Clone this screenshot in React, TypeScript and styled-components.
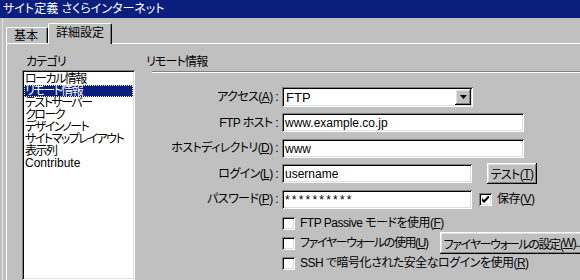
import React from "react";
import styled, { createGlobalStyle } from "styled-components";

const GlobalStyle = createGlobalStyle`
  html, body {
    margin: 0;
    background: #c0c0c0;
  }
  body {
    font-family: "Liberation Sans", "Noto Sans CJK JP", sans-serif;
    font-size: 12px;
    font-feature-settings: "palt";
    color: #000;
  }
`;

const sunken = `
  background: #fff;
  box-shadow: inset 1px 1px #808080, inset -1px -1px #fff,
    inset 2px 2px #000, inset -2px -2px #dfdfdf;
`;

const raised = `
  background: #c0c0c0;
  box-shadow: inset -1px -1px #000, inset 1px 1px #fff,
    inset -2px -2px #808080, inset 2px 2px #dfdfdf;
`;

const categories = [
  "ローカル情報",
  "リモート情報",
  "テストサーバー",
  "クローク",
  "デザインノート",
  "サイトマップレイアウト",
  "表示列",
  "Contribute",
];

// katakana in the old bitmap UI font is narrow, so japanese rows get squeezed
const isJapanese = (s: string) => /[^\x00-\x7f]/.test(s);

const App = () => {
  return (
    <>
      <GlobalStyle />
      <Window>
        <TitleBar>サイト定義 さくらインターネット</TitleBar>
        <Body>
          <TabStrip>
            <Tab>基本</Tab>
            <Tab $active>詳細設定</Tab>
          </TabStrip>
          <Panel>
            {/* category list */}
            <LeftCol>
              <CatLabel>カテゴリ</CatLabel>
              <ListBox>
                {categories.map((c) => (
                  <ListItem
                    key={c}
                    $selected={c === "リモート情報"}
                    $tight={isJapanese(c)}
                  >
                    {c}
                  </ListItem>
                ))}
              </ListBox>
            </LeftCol>

            {/* remote info form */}
            <RightCol>
              <GroupLabel>リモート情報</GroupLabel>
              <Rule />
              <Form>
                <Label>
                  アクセス(<Key>A</Key>) :
                </Label>
                <Field>
                  <Select>
                    <SelectValue>FTP</SelectValue>
                    <DropButton>
                      <svg width="7" height="4" viewBox="0 0 7 4">
                        <path d="M0 0h7L3.5 4z" fill="#000" />
                      </svg>
                    </DropButton>
                  </Select>
                </Field>

                <Label>FTP ホスト :</Label>
                <Field>
                  <TextBox $width={242}>www.example.co.jp</TextBox>
                </Field>

                <Label>
                  ホストディレクトリ(<Key>D</Key>) :
                </Label>
                <Field>
                  <TextBox $width={242}>www</TextBox>
                </Field>

                <Label>
                  ログイン(<Key>L</Key>) :
                </Label>
                <Field>
                  <TextBox $width={190}>username</TextBox>
                  <TestButton>
                    テスト(<Key>T</Key>)
                  </TestButton>
                </Field>

                <Label>
                  パスワード(<Key>P</Key>) :
                </Label>
                <Field>
                  <TextBox $width={190} $secret>
                    **********
                  </TextBox>
                  <CheckBox $inline>
                    <svg width="7" height="7" viewBox="0 0 7 7">
                      <path d="M0 2v3l2 2 5-5V-1L2 4z" fill="#000" />
                    </svg>
                  </CheckBox>
                  <CheckText>
                    保存(<Key>V</Key>)
                  </CheckText>
                </Field>
              </Form>

              <Checks>
                <CheckRow>
                  <CheckBox />
                  <CheckText>
                    FTP Passive モードを使用(<Key>F</Key>)
                  </CheckText>
                </CheckRow>
                <CheckRow>
                  <CheckBox />
                  <CheckText $spacing={-1.4}>
                    ファイヤーウォールの使用(<Key>U</Key>)
                  </CheckText>
                  <WideButton>
                    ファイヤーウォールの設定(<Key>W</Key>)...
                  </WideButton>
                </CheckRow>
                <CheckRow>
                  <CheckBox />
                  <CheckText>
                    SSH で暗号化された安全なログインを使用(<Key>R</Key>)
                  </CheckText>
                </CheckRow>
              </Checks>
            </RightCol>
          </Panel>
        </Body>
      </Window>
    </>
  );
};

export default App;

const Window = styled.div`
  width: 580px;
  height: 280px;
  overflow: hidden;
  display: flex;
  flex-direction: column;
`;

const TitleBar = styled.div`
  height: 18px;
  flex-shrink: 0;
  background: #0a1f7d;
  color: #fff;
  line-height: 18px;
  padding-left: 3px;
  white-space: nowrap;
`;

const Body = styled.div`
  flex: 1;
  display: flex;
  flex-direction: column;
  margin-left: 2px;
  border-left: 1px solid #e4e4e4;
  padding-left: 3px;
  min-height: 0;
`;

const TabStrip = styled.div`
  height: 25px;
  flex-shrink: 0;
  display: flex;
  align-items: flex-end;
`;

const Tab = styled.div<{ $active?: boolean }>`
  position: relative;
  z-index: 1;
  box-sizing: border-box;
  height: ${(p) => (p.$active ? 21 : 16)}px;
  width: ${(p) => (p.$active ? 64 : 42)}px;
  margin-bottom: ${(p) => (p.$active ? -1 : 0)}px;
  padding: ${(p) => (p.$active ? 3 : 2)}px 0 0 7px;
  line-height: 12px;
  background: #c0c0c0;
  border-top: 1px solid #fff;
  border-left: 1px solid #fff;
  border-right: 1px solid #000;
  border-radius: 2px 2px 0 0;
  box-shadow: inset -1px 0 #808080;
  white-space: nowrap;
`;

const Panel = styled.div`
  flex: 1;
  display: flex;
  border-top: 1px solid #fff;
  border-left: 1px solid #fff;
  padding: 12px 0 0 15px;
  min-height: 0;
`;

const LeftCol = styled.div`
  width: 113px;
  flex-shrink: 0;
  display: flex;
  flex-direction: column;
`;

const CatLabel = styled.div`
  line-height: 12px;
  padding-left: 4px;
  margin-bottom: 2px;
  letter-spacing: -0.8px;
`;

const ListBox = styled.div`
  flex: 1;
  ${sunken}
  padding: 3px 2px 2px;
`;

const ListItem = styled.div<{ $selected?: boolean; $tight?: boolean }>`
  height: 12px;
  line-height: 12px;
  padding-left: 1px;
  white-space: nowrap;
  letter-spacing: ${(p) => (p.$tight ? "-1.5px" : "0")};
  background: ${(p) => (p.$selected ? "#0a1f7d" : "transparent")};
  color: ${(p) => (p.$selected ? "#fff" : "#000")};
  outline: ${(p) => (p.$selected ? "1px dotted #f4f08c" : "none")};
  outline-offset: -1px;
`;

const RightCol = styled.div`
  flex: 1;
  margin-left: 11px;
  display: flex;
  flex-direction: column;
`;

const GroupLabel = styled.div`
  line-height: 12px;
  letter-spacing: -0.8px;
`;

const Rule = styled.div`
  margin: 3px 0 0 6px;
  border-top: 1px solid #808080;
  border-bottom: 1px solid #fff;
`;

const Form = styled.div`
  margin-top: 14px;
  display: grid;
  grid-template-columns: 132px 1fr;
  column-gap: 4px;
  grid-auto-rows: 20px;
  row-gap: 5.5px;
`;

const Label = styled.div`
  align-self: center;
  text-align: right;
  white-space: nowrap;
  line-height: 12px;
  letter-spacing: -0.6px;
`;

const Key = styled.span`
  text-decoration: underline;
`;

const Field = styled.div`
  display: flex;
  align-items: center;
`;

const Select = styled.div`
  width: 191px;
  height: 20px;
  box-sizing: border-box;
  ${sunken}
  display: flex;
  align-items: center;
  justify-content: space-between;
`;

const SelectValue = styled.span`
  padding-left: 4px;
  font-size: 13px;
`;

const DropButton = styled.div`
  width: 16px;
  height: 16px;
  margin-right: 2px;
  ${raised}
  display: flex;
  align-items: center;
  justify-content: center;
`;

const TextBox = styled.div<{ $width: number; $secret?: boolean }>`
  width: ${(p) => p.$width}px;
  height: 19px;
  flex-shrink: 0;
  box-sizing: border-box;
  ${sunken}
  padding: 3px 0 0 3px;
  line-height: 14px;
  letter-spacing: ${(p) => (p.$secret ? "2.2px" : "0")};
  white-space: nowrap;
  overflow: hidden;
`;

const TestButton = styled.div`
  margin-left: 15px;
  width: 50px;
  height: 21px;
  ${raised}
  display: flex;
  align-items: center;
  justify-content: center;
  white-space: nowrap;
  letter-spacing: -0.6px;
`;

const CheckBox = styled.div<{ $inline?: boolean }>`
  width: 13px;
  height: 13px;
  flex-shrink: 0;
  box-sizing: border-box;
  margin-left: ${(p) => (p.$inline ? 7 : 0)}px;
  ${sunken}
  display: flex;
  align-items: center;
  justify-content: center;
`;

const CheckText = styled.span<{ $spacing?: number }>`
  margin-left: 5px;
  white-space: nowrap;
  line-height: 12px;
  letter-spacing: ${(p) => p.$spacing ?? -0.5}px;
`;

const Checks = styled.div`
  margin: 4px 0 0 136px;
  display: flex;
  flex-direction: column;
`;

const CheckRow = styled.div`
  height: 20px;
  display: flex;
  align-items: center;
`;

const WideButton = styled.div`
  margin-left: 12px;
  height: 22px;
  flex-shrink: 0;
  padding: 0 6px 0 4px;
  ${raised}
  display: flex;
  align-items: center;
  white-space: nowrap;
  letter-spacing: -1.3px;
`;
